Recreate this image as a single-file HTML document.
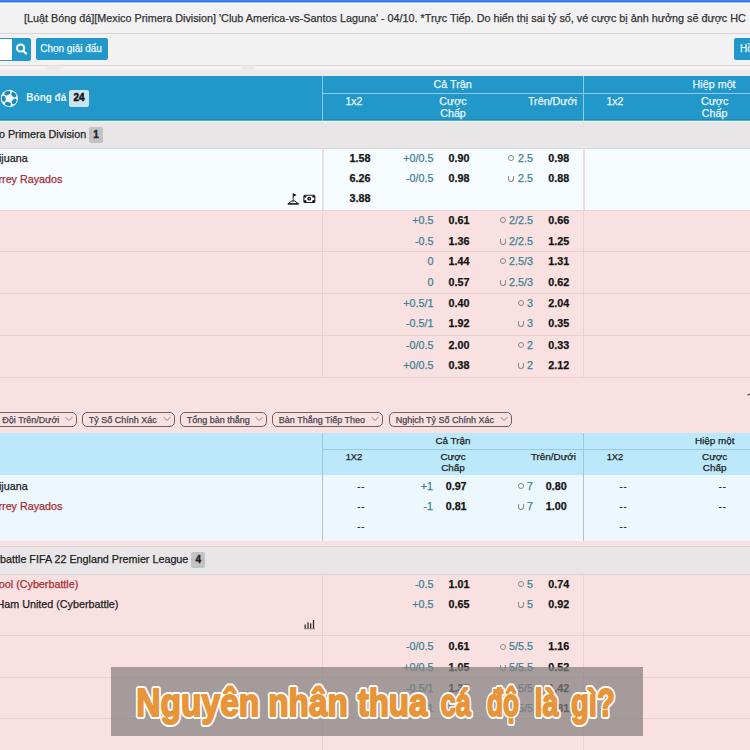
<!DOCTYPE html>
<html><head><meta charset="utf-8"><style>
html,body{margin:0;padding:0;}
body{width:750px;height:750px;overflow:hidden;position:relative;background:#f2f2f2;font-family:"Liberation Sans", sans-serif;}
</style></head><body>
<div style="position:absolute;left:0px;top:0px;width:750px;height:1px;background:#3a89f6"></div>
<div style="position:absolute;left:0px;top:1px;width:750px;height:1px;background:#2f72d9"></div>
<div style="position:absolute;left:0px;top:2px;width:750px;height:1px;background:#a3bdec"></div>
<div style="position:absolute;left:0px;top:3px;width:750px;height:1px;background:#f8fdff"></div>
<div style="position:absolute;left:0px;top:4px;width:750px;height:1px;background:#eff0f4"></div>
<div style="position:absolute;left:24px;top:18.06px;height:0;line-height:0;font-size:10.8px;font-weight:400;color:#333;-webkit-text-stroke:0.25px #333;white-space:nowrap;">[Luật Bóng đá][Mexico Primera Division] 'Club America-vs-Santos Laguna' - 04/10. *Trực Tiếp. Do hiển thị sai tỷ số, vé cược bị ảnh hưởng sẽ được HC</div>
<div style="position:absolute;left:0px;top:33px;width:750px;height:1px;background:#d6d6d6"></div>
<div style="position:absolute;left:0px;top:38px;width:12px;height:22.5px;background:#fff;border-top:1px solid #3d90b8;border-bottom:1px solid #3d90b8;box-sizing:border-box"></div>
<div style="position:absolute;left:12px;top:38px;width:19px;height:22.5px;background:#2297c9;border-radius:0 2px 2px 0"></div>
<svg style="position:absolute;left:14px;top:41px" width="15" height="16" viewBox="0 0 15 16"><circle cx="6.6" cy="7" r="3.6" fill="none" stroke="#fff" stroke-width="2"/><line x1="9.2" y1="9.7" x2="12" y2="12.6" stroke="#fff" stroke-width="2.2" stroke-linecap="round"/></svg>
<div style="position:absolute;left:36px;top:38.4px;width:72.2px;height:22.1px;background:#2297c9;border-radius:2px"></div>
<div style="position:absolute;left:40.2px;top:49.14px;height:0;line-height:0;font-size:10px;font-weight:400;color:#eafaff;-webkit-text-stroke:0.25px #eafaff;white-space:nowrap;">Chọn giải đấu</div>
<div style="position:absolute;left:734px;top:38.2px;width:26px;height:22.299999999999997px;background:#2297c9;border-radius:2px"></div>
<div style="position:absolute;left:740px;top:49.14px;height:0;line-height:0;font-size:10px;font-weight:400;color:#eafaff;-webkit-text-stroke:0.25px #eafaff;white-space:nowrap;">Hồ</div>
<div style="position:absolute;left:0px;top:65px;width:750px;height:1px;background:#d9d7d7"></div>
<div style="position:absolute;left:0px;top:66px;width:750px;height:4px;background:#f4f2f2"></div>
<div style="position:absolute;left:0px;top:70px;width:750px;height:6px;background:#ebe9e9"></div>
<svg style="position:absolute;left:46px;top:65px" width="16" height="6" viewBox="0 0 16 6"><polygon points="3,0.5 13,0.5 16,5 0,5" fill="#ebe9e9"/></svg>
<svg style="position:absolute;left:239.5px;top:65px" width="16" height="6" viewBox="0 0 16 6"><polygon points="3,0.5 13,0.5 16,5 0,5" fill="#ebe9e9"/></svg>
<div style="position:absolute;left:0px;top:76px;width:750px;height:43px;background:#2297c9"></div>
<div style="position:absolute;left:0px;top:119px;width:750px;height:1px;background:#2089b6"></div>
<div style="position:absolute;left:0px;top:120px;width:750px;height:1px;background:#5ea9c2"></div>
<div style="position:absolute;left:0px;top:121px;width:750px;height:1px;background:#e3fbff"></div>
<div style="position:absolute;left:322px;top:76px;width:1px;height:45px;background:#8fcbe6"></div>
<div style="position:absolute;left:583px;top:76px;width:1px;height:45px;background:#8fcbe6"></div>
<div style="position:absolute;left:323px;top:93px;width:427px;height:1px;background:#8fcbe6"></div>
<svg style="position:absolute;left:0px;top:89px" width="19" height="19" viewBox="0 0 19 19"><circle cx="9.4" cy="9.4" r="8.6" fill="#eefaff"/><ellipse cx="3.71" cy="9.80" rx="3.0" ry="2.0" transform="rotate(266 3.71 9.80)" fill="#1f88b9"/><ellipse cx="7.26" cy="4.12" rx="3.0" ry="2.0" transform="rotate(-22 7.26 4.12)" fill="#1f88b9"/><ellipse cx="13.77" cy="5.74" rx="3.0" ry="2.0" transform="rotate(50 13.77 5.74)" fill="#1f88b9"/><ellipse cx="14.23" cy="12.42" rx="3.0" ry="2.0" transform="rotate(122 14.23 12.42)" fill="#1f88b9"/><ellipse cx="8.02" cy="14.93" rx="3.0" ry="2.0" transform="rotate(194 8.02 14.93)" fill="#1f88b9"/></svg>
<div style="position:absolute;left:26.3px;top:97.53px;height:0;line-height:0;font-size:10px;font-weight:700;color:#e2f7ff;-webkit-text-stroke:0.25px #e2f7ff;white-space:nowrap;-webkit-text-stroke:0">Bóng đá</div>
<div style="position:absolute;left:69px;top:90px;width:20px;height:16.5px;background:#c9e4f2;border-radius:2px"></div>
<div style="position:absolute;left:-221px;width:600px;text-align:center;top:97.53px;height:0;line-height:0;font-size:10px;font-weight:700;color:#111;-webkit-text-stroke:0.25px #111;white-space:nowrap;-webkit-text-stroke:0.45px #111">24</div>
<div style="position:absolute;left:152.7px;width:600px;text-align:center;top:84.28px;height:0;line-height:0;font-size:10.75px;font-weight:400;color:#e9f8ff;-webkit-text-stroke:0.25px #e9f8ff;white-space:nowrap;">Cả Trận</div>
<div style="position:absolute;right:36px;top:84.28px;height:0;line-height:0;font-size:10.75px;font-weight:400;color:#e9f8ff;-webkit-text-stroke:0.25px #e9f8ff;white-space:nowrap;right:14.4px">Hiệp một</div>
<div style="position:absolute;left:54px;width:600px;text-align:center;top:101.26px;height:0;line-height:0;font-size:10.5px;font-weight:400;color:#e9f8ff;-webkit-text-stroke:0.25px #e9f8ff;white-space:nowrap;">1x2</div>
<div style="position:absolute;left:153px;width:600px;text-align:center;top:101.18px;height:0;line-height:0;font-size:10.75px;font-weight:400;color:#e9f8ff;-webkit-text-stroke:0.25px #e9f8ff;white-space:nowrap;">Cược</div>
<div style="position:absolute;left:153px;width:600px;text-align:center;top:112.78px;height:0;line-height:0;font-size:10.75px;font-weight:400;color:#e9f8ff;-webkit-text-stroke:0.25px #e9f8ff;white-space:nowrap;">Chấp</div>
<div style="position:absolute;right:173px;top:101.18px;height:0;line-height:0;font-size:10.75px;font-weight:400;color:#e9f8ff;-webkit-text-stroke:0.25px #e9f8ff;white-space:nowrap;">Trên/Dưới</div>
<div style="position:absolute;left:315px;width:600px;text-align:center;top:101.26px;height:0;line-height:0;font-size:10.5px;font-weight:400;color:#e9f8ff;-webkit-text-stroke:0.25px #e9f8ff;white-space:nowrap;">1x2</div>
<div style="position:absolute;left:414.6px;width:600px;text-align:center;top:101.18px;height:0;line-height:0;font-size:10.75px;font-weight:400;color:#e9f8ff;-webkit-text-stroke:0.25px #e9f8ff;white-space:nowrap;">Cược</div>
<div style="position:absolute;left:414.6px;width:600px;text-align:center;top:112.78px;height:0;line-height:0;font-size:10.75px;font-weight:400;color:#e9f8ff;-webkit-text-stroke:0.25px #e9f8ff;white-space:nowrap;">Chấp</div>
<div style="position:absolute;left:0px;top:122px;width:750px;height:26px;background:#e8e6e6"></div>
<div style="position:absolute;left:0px;top:148px;width:750px;height:1px;background:#d8d8d8"></div>
<div style="position:absolute;right:663.8px;top:134.28px;height:0;line-height:0;font-size:10.75px;font-weight:400;color:#222;-webkit-text-stroke:0.25px #222;white-space:nowrap;">Mexico Primera Division</div>
<div style="position:absolute;left:89.3px;top:126.8px;width:13.400000000000006px;height:16.000000000000014px;background:#c3c3c3;border-radius:2px"></div>
<div style="position:absolute;left:-204px;width:600px;text-align:center;top:134.73px;height:0;line-height:0;font-size:10px;font-weight:700;color:#222;-webkit-text-stroke:0.25px #222;white-space:nowrap;-webkit-text-stroke:0.4px #222">1</div>
<div style="position:absolute;left:0px;top:149px;width:750px;height:61px;background:#f6fcff"></div>
<div style="position:absolute;left:322px;top:149px;width:1.5px;height:61px;background:#e9e0e0"></div>
<div style="position:absolute;left:583px;top:149px;width:1.5px;height:61px;background:#e9e0e0"></div>
<div style="position:absolute;right:722.4px;top:158.28px;height:0;line-height:0;font-size:10.75px;font-weight:400;color:#1a1a1a;-webkit-text-stroke:0.25px #1a1a1a;white-space:nowrap;">Tijuana</div>
<div style="position:absolute;right:687.6px;top:179.18px;height:0;line-height:0;font-size:10.75px;font-weight:400;color:#a52d33;-webkit-text-stroke:0.25px #a52d33;white-space:nowrap;">Monterrey Rayados</div>
<div style="position:absolute;right:379.5px;top:157.58px;height:0;line-height:0;font-size:10.75px;font-weight:700;color:#141414;-webkit-text-stroke:0.25px #141414;white-space:nowrap;">1.58</div>
<div style="position:absolute;right:316.5px;top:157.58px;height:0;line-height:0;font-size:10.75px;font-weight:400;color:#3f8294;-webkit-text-stroke:0.25px #3f8294;white-space:nowrap;">+0/0.5</div>
<div style="position:absolute;right:280.5px;top:157.58px;height:0;line-height:0;font-size:10.75px;font-weight:700;color:#141414;-webkit-text-stroke:0.25px #141414;white-space:nowrap;">0.90</div>
<div style="position:absolute;right:217px;top:157.58px;height:0;line-height:0;font-size:10.75px;font-weight:400;color:#3f8294;-webkit-text-stroke:0.25px #3f8294;white-space:nowrap;">2.5</div>
<div style="position:absolute;right:180.79999999999995px;top:157.58px;height:0;line-height:0;font-size:10.75px;font-weight:700;color:#141414;-webkit-text-stroke:0.25px #141414;white-space:nowrap;">0.98</div>
<div style="position:absolute;left:508px;top:154.70000000000002px;width:6px;height:6.0px;border:1px solid #8a8a8a;border-radius:50%;box-sizing:border-box"></div>
<div style="position:absolute;right:379.5px;top:178.38px;height:0;line-height:0;font-size:10.75px;font-weight:700;color:#141414;-webkit-text-stroke:0.25px #141414;white-space:nowrap;">6.26</div>
<div style="position:absolute;right:316.5px;top:178.38px;height:0;line-height:0;font-size:10.75px;font-weight:400;color:#3f8294;-webkit-text-stroke:0.25px #3f8294;white-space:nowrap;">-0/0.5</div>
<div style="position:absolute;right:280.5px;top:178.38px;height:0;line-height:0;font-size:10.75px;font-weight:700;color:#141414;-webkit-text-stroke:0.25px #141414;white-space:nowrap;">0.98</div>
<div style="position:absolute;right:217px;top:178.38px;height:0;line-height:0;font-size:10.75px;font-weight:400;color:#3f8294;-webkit-text-stroke:0.25px #3f8294;white-space:nowrap;">2.5</div>
<div style="position:absolute;right:180.79999999999995px;top:178.38px;height:0;line-height:0;font-size:10.75px;font-weight:700;color:#141414;-webkit-text-stroke:0.25px #141414;white-space:nowrap;">0.88</div>
<div style="position:absolute;left:508px;top:176.1px;width:6px;height:6.199999999999989px;border:1.1px solid #8a8a8a;border-top:none;border-radius:0 0 3px 3px;box-sizing:border-box"></div>
<div style="position:absolute;right:379.5px;top:197.58px;height:0;line-height:0;font-size:10.75px;font-weight:700;color:#141414;-webkit-text-stroke:0.25px #141414;white-space:nowrap;">3.88</div>
<svg style="position:absolute;left:286px;top:192px" width="14" height="13" viewBox="0 0 14 13"><line x1="7.2" y1="1.4" x2="7.2" y2="9.2" stroke="#222" stroke-width="0.9"/><polygon points="7.2,1.2 10.6,3.1 7.2,5" fill="#111"/><path d="M1.8 11.9 L5.6 9 L8.8 9 L12.6 11.9 Z" fill="none" stroke="#111" stroke-width="1" stroke-linejoin="round"/><path d="M2.2 11.9 L12.2 11.9" stroke="#111" stroke-width="1.2"/></svg>
<svg style="position:absolute;left:303px;top:194px" width="13" height="10" viewBox="0 0 13 10"><rect x="0.9" y="1.3" width="10.9" height="7.2" rx="1" fill="#fff" stroke="#222" stroke-width="1.1"/><circle cx="2.2" cy="2.6" r="1.2" fill="#111"/><circle cx="10.5" cy="2.6" r="1.2" fill="#111"/><circle cx="2.2" cy="7.2" r="1.2" fill="#111"/><circle cx="10.5" cy="7.2" r="1.2" fill="#111"/><circle cx="6.2" cy="4.7" r="1.9" fill="#111"/><polygon points="5.5,4 7.4,4.4 6.2,5.6" fill="#ddd"/></svg>
<div style="position:absolute;left:0px;top:210px;width:750px;height:222.60000000000002px;background:#f9e1e1"></div>
<div style="position:absolute;left:0px;top:210px;width:750px;height:1px;background:#e9d5d7"></div>
<div style="position:absolute;left:0px;top:251px;width:750px;height:1px;background:#ead2d2"></div>
<div style="position:absolute;left:0px;top:293px;width:750px;height:1px;background:#ead2d2"></div>
<div style="position:absolute;left:0px;top:335px;width:750px;height:1px;background:#ead2d2"></div>
<div style="position:absolute;left:0px;top:376.5px;width:750px;height:1.0px;background:#ead2d2"></div>
<div style="position:absolute;left:322px;top:210px;width:1px;height:166.5px;background:#ead2d2"></div>
<div style="position:absolute;left:583px;top:210px;width:1px;height:166.5px;background:#ead2d2"></div>
<div style="position:absolute;right:316.5px;top:220.28px;height:0;line-height:0;font-size:10.75px;font-weight:400;color:#3f8294;-webkit-text-stroke:0.25px #3f8294;white-space:nowrap;">+0.5</div>
<div style="position:absolute;right:280.5px;top:220.28px;height:0;line-height:0;font-size:10.75px;font-weight:700;color:#141414;-webkit-text-stroke:0.25px #141414;white-space:nowrap;">0.61</div>
<div style="position:absolute;right:217px;top:220.28px;height:0;line-height:0;font-size:10.75px;font-weight:400;color:#3f8294;-webkit-text-stroke:0.25px #3f8294;white-space:nowrap;">2/2.5</div>
<div style="position:absolute;right:180.79999999999995px;top:220.28px;height:0;line-height:0;font-size:10.75px;font-weight:700;color:#141414;-webkit-text-stroke:0.25px #141414;white-space:nowrap;">0.66</div>
<div style="position:absolute;left:500.078125px;top:217.4px;width:6.0px;height:6.0px;border:1px solid #8a8a8a;border-radius:50%;box-sizing:border-box"></div>
<div style="position:absolute;right:316.5px;top:240.88px;height:0;line-height:0;font-size:10.75px;font-weight:400;color:#3f8294;-webkit-text-stroke:0.25px #3f8294;white-space:nowrap;">-0.5</div>
<div style="position:absolute;right:280.5px;top:240.88px;height:0;line-height:0;font-size:10.75px;font-weight:700;color:#141414;-webkit-text-stroke:0.25px #141414;white-space:nowrap;">1.36</div>
<div style="position:absolute;right:217px;top:240.88px;height:0;line-height:0;font-size:10.75px;font-weight:400;color:#3f8294;-webkit-text-stroke:0.25px #3f8294;white-space:nowrap;">2/2.5</div>
<div style="position:absolute;right:180.79999999999995px;top:240.88px;height:0;line-height:0;font-size:10.75px;font-weight:700;color:#141414;-webkit-text-stroke:0.25px #141414;white-space:nowrap;">1.25</div>
<div style="position:absolute;left:500.078125px;top:238.6px;width:6.0px;height:6.199999999999989px;border:1.1px solid #8a8a8a;border-top:none;border-radius:0 0 3px 3px;box-sizing:border-box"></div>
<div style="position:absolute;right:316.5px;top:261.28px;height:0;line-height:0;font-size:10.75px;font-weight:400;color:#3f8294;-webkit-text-stroke:0.25px #3f8294;white-space:nowrap;">0</div>
<div style="position:absolute;right:280.5px;top:261.28px;height:0;line-height:0;font-size:10.75px;font-weight:700;color:#141414;-webkit-text-stroke:0.25px #141414;white-space:nowrap;">1.44</div>
<div style="position:absolute;right:217px;top:261.28px;height:0;line-height:0;font-size:10.75px;font-weight:400;color:#3f8294;-webkit-text-stroke:0.25px #3f8294;white-space:nowrap;">2.5/3</div>
<div style="position:absolute;right:180.79999999999995px;top:261.28px;height:0;line-height:0;font-size:10.75px;font-weight:700;color:#141414;-webkit-text-stroke:0.25px #141414;white-space:nowrap;">1.31</div>
<div style="position:absolute;left:500.078125px;top:258.4px;width:6.0px;height:6.0px;border:1px solid #8a8a8a;border-radius:50%;box-sizing:border-box"></div>
<div style="position:absolute;right:316.5px;top:281.88px;height:0;line-height:0;font-size:10.75px;font-weight:400;color:#3f8294;-webkit-text-stroke:0.25px #3f8294;white-space:nowrap;">0</div>
<div style="position:absolute;right:280.5px;top:281.88px;height:0;line-height:0;font-size:10.75px;font-weight:700;color:#141414;-webkit-text-stroke:0.25px #141414;white-space:nowrap;">0.57</div>
<div style="position:absolute;right:217px;top:281.88px;height:0;line-height:0;font-size:10.75px;font-weight:400;color:#3f8294;-webkit-text-stroke:0.25px #3f8294;white-space:nowrap;">2.5/3</div>
<div style="position:absolute;right:180.79999999999995px;top:281.88px;height:0;line-height:0;font-size:10.75px;font-weight:700;color:#141414;-webkit-text-stroke:0.25px #141414;white-space:nowrap;">0.62</div>
<div style="position:absolute;left:500.078125px;top:279.6px;width:6.0px;height:6.199999999999989px;border:1.1px solid #8a8a8a;border-top:none;border-radius:0 0 3px 3px;box-sizing:border-box"></div>
<div style="position:absolute;right:316.5px;top:303.28px;height:0;line-height:0;font-size:10.75px;font-weight:400;color:#3f8294;-webkit-text-stroke:0.25px #3f8294;white-space:nowrap;">+0.5/1</div>
<div style="position:absolute;right:280.5px;top:303.28px;height:0;line-height:0;font-size:10.75px;font-weight:700;color:#141414;-webkit-text-stroke:0.25px #141414;white-space:nowrap;">0.40</div>
<div style="position:absolute;right:217px;top:303.28px;height:0;line-height:0;font-size:10.75px;font-weight:400;color:#3f8294;-webkit-text-stroke:0.25px #3f8294;white-space:nowrap;">3</div>
<div style="position:absolute;right:180.79999999999995px;top:303.28px;height:0;line-height:0;font-size:10.75px;font-weight:700;color:#141414;-webkit-text-stroke:0.25px #141414;white-space:nowrap;">2.04</div>
<div style="position:absolute;left:518.015625px;top:300.4px;width:6.0px;height:6.0px;border:1px solid #8a8a8a;border-radius:50%;box-sizing:border-box"></div>
<div style="position:absolute;right:316.5px;top:323.48px;height:0;line-height:0;font-size:10.75px;font-weight:400;color:#3f8294;-webkit-text-stroke:0.25px #3f8294;white-space:nowrap;">-0.5/1</div>
<div style="position:absolute;right:280.5px;top:323.48px;height:0;line-height:0;font-size:10.75px;font-weight:700;color:#141414;-webkit-text-stroke:0.25px #141414;white-space:nowrap;">1.92</div>
<div style="position:absolute;right:217px;top:323.48px;height:0;line-height:0;font-size:10.75px;font-weight:400;color:#3f8294;-webkit-text-stroke:0.25px #3f8294;white-space:nowrap;">3</div>
<div style="position:absolute;right:180.79999999999995px;top:323.48px;height:0;line-height:0;font-size:10.75px;font-weight:700;color:#141414;-webkit-text-stroke:0.25px #141414;white-space:nowrap;">0.35</div>
<div style="position:absolute;left:518.015625px;top:321.2px;width:6.0px;height:6.199999999999989px;border:1.1px solid #8a8a8a;border-top:none;border-radius:0 0 3px 3px;box-sizing:border-box"></div>
<div style="position:absolute;right:316.5px;top:344.88px;height:0;line-height:0;font-size:10.75px;font-weight:400;color:#3f8294;-webkit-text-stroke:0.25px #3f8294;white-space:nowrap;">-0/0.5</div>
<div style="position:absolute;right:280.5px;top:344.88px;height:0;line-height:0;font-size:10.75px;font-weight:700;color:#141414;-webkit-text-stroke:0.25px #141414;white-space:nowrap;">2.00</div>
<div style="position:absolute;right:217px;top:344.88px;height:0;line-height:0;font-size:10.75px;font-weight:400;color:#3f8294;-webkit-text-stroke:0.25px #3f8294;white-space:nowrap;">2</div>
<div style="position:absolute;right:180.79999999999995px;top:344.88px;height:0;line-height:0;font-size:10.75px;font-weight:700;color:#141414;-webkit-text-stroke:0.25px #141414;white-space:nowrap;">0.33</div>
<div style="position:absolute;left:518.015625px;top:342.0px;width:6.0px;height:6.0px;border:1px solid #8a8a8a;border-radius:50%;box-sizing:border-box"></div>
<div style="position:absolute;right:316.5px;top:365.28px;height:0;line-height:0;font-size:10.75px;font-weight:400;color:#3f8294;-webkit-text-stroke:0.25px #3f8294;white-space:nowrap;">+0/0.5</div>
<div style="position:absolute;right:280.5px;top:365.28px;height:0;line-height:0;font-size:10.75px;font-weight:700;color:#141414;-webkit-text-stroke:0.25px #141414;white-space:nowrap;">0.38</div>
<div style="position:absolute;right:217px;top:365.28px;height:0;line-height:0;font-size:10.75px;font-weight:400;color:#3f8294;-webkit-text-stroke:0.25px #3f8294;white-space:nowrap;">2</div>
<div style="position:absolute;right:180.79999999999995px;top:365.28px;height:0;line-height:0;font-size:10.75px;font-weight:700;color:#141414;-webkit-text-stroke:0.25px #141414;white-space:nowrap;">2.12</div>
<div style="position:absolute;left:518.015625px;top:363px;width:6.0px;height:6.199999999999989px;border:1.1px solid #8a8a8a;border-top:none;border-radius:0 0 3px 3px;box-sizing:border-box"></div>
<div style="position:absolute;left:-40px;top:412.3px;width:116.8px;height:15.199999999999989px;border:1.3px solid #6e6264;border-radius:5px;box-sizing:border-box"></div>
<div style="position:absolute;right:690.7px;top:419.88px;height:0;line-height:0;font-size:9px;font-weight:400;color:#474550;-webkit-text-stroke:0.25px #474550;white-space:nowrap;">Tổng Đội Trên/Dưới</div>
<svg style="position:absolute;left:64.8px;top:416px" width="8" height="6" viewBox="0 0 8 6"><polyline points="0.7,1.2 4,4.5 7.3,1.2" fill="none" stroke="#8a8486" stroke-width="1"/></svg>
<div style="position:absolute;left:82.1px;top:412.3px;width:92.6px;height:15.199999999999989px;border:1.3px solid #6e6264;border-radius:5px;box-sizing:border-box"></div>
<div style="position:absolute;left:88.8px;top:419.88px;height:0;line-height:0;font-size:9px;font-weight:400;color:#474550;-webkit-text-stroke:0.25px #474550;white-space:nowrap;">Tỷ Số Chính Xác</div>
<svg style="position:absolute;left:162.7px;top:416px" width="8" height="6" viewBox="0 0 8 6"><polyline points="0.7,1.2 4,4.5 7.3,1.2" fill="none" stroke="#8a8486" stroke-width="1"/></svg>
<div style="position:absolute;left:180px;top:412.3px;width:86.69999999999999px;height:15.199999999999989px;border:1.3px solid #6e6264;border-radius:5px;box-sizing:border-box"></div>
<div style="position:absolute;left:186.7px;top:419.88px;height:0;line-height:0;font-size:9px;font-weight:400;color:#474550;-webkit-text-stroke:0.25px #474550;white-space:nowrap;">Tổng bàn thắng</div>
<svg style="position:absolute;left:254.7px;top:416px" width="8" height="6" viewBox="0 0 8 6"><polyline points="0.7,1.2 4,4.5 7.3,1.2" fill="none" stroke="#8a8486" stroke-width="1"/></svg>
<div style="position:absolute;left:272.1px;top:412.3px;width:110.89999999999998px;height:15.199999999999989px;border:1.3px solid #6e6264;border-radius:5px;box-sizing:border-box"></div>
<div style="position:absolute;left:278.8px;top:419.88px;height:0;line-height:0;font-size:9px;font-weight:400;color:#474550;-webkit-text-stroke:0.25px #474550;white-space:nowrap;">Bàn Thắng Tiếp Theo</div>
<svg style="position:absolute;left:371px;top:416px" width="8" height="6" viewBox="0 0 8 6"><polyline points="0.7,1.2 4,4.5 7.3,1.2" fill="none" stroke="#8a8486" stroke-width="1"/></svg>
<div style="position:absolute;left:389px;top:412.3px;width:123px;height:15.199999999999989px;border:1.3px solid #6e6264;border-radius:5px;box-sizing:border-box"></div>
<div style="position:absolute;left:395.7px;top:419.88px;height:0;line-height:0;font-size:9px;font-weight:400;color:#474550;-webkit-text-stroke:0.25px #474550;white-space:nowrap;">Nghịch Tỷ Số Chính Xác</div>
<svg style="position:absolute;left:500px;top:416px" width="8" height="6" viewBox="0 0 8 6"><polyline points="0.7,1.2 4,4.5 7.3,1.2" fill="none" stroke="#8a8486" stroke-width="1"/></svg>
<svg style="position:absolute;left:744px;top:390px" width="6" height="8" viewBox="0 0 6 8"><line x1="3.5" y1="5.2" x2="7" y2="3.6" stroke="#444" stroke-width="1.1"/></svg>
<div style="position:absolute;left:0px;top:432.6px;width:750px;height:42.39999999999998px;background:#bce8fb"></div>
<div style="position:absolute;left:322px;top:432.6px;width:1px;height:42.39999999999998px;background:#98c9dc"></div>
<div style="position:absolute;left:583px;top:432.6px;width:1px;height:42.39999999999998px;background:#98c9dc"></div>
<div style="position:absolute;left:323px;top:449px;width:427px;height:1px;background:#98c9dc"></div>
<div style="position:absolute;left:153px;width:600px;text-align:center;top:440.57px;height:0;line-height:0;font-size:9.9px;font-weight:400;color:#222;-webkit-text-stroke:0.25px #222;white-space:nowrap;">Cả Trận</div>
<div style="position:absolute;right:15.5px;top:440.57px;height:0;line-height:0;font-size:9.9px;font-weight:400;color:#222;-webkit-text-stroke:0.25px #222;white-space:nowrap;">Hiệp một</div>
<div style="position:absolute;left:54px;width:600px;text-align:center;top:457.34px;height:0;line-height:0;font-size:9.4px;font-weight:400;color:#222;-webkit-text-stroke:0.25px #222;white-space:nowrap;">1X2</div>
<div style="position:absolute;left:153px;width:600px;text-align:center;top:457.17px;height:0;line-height:0;font-size:9.9px;font-weight:400;color:#222;-webkit-text-stroke:0.25px #222;white-space:nowrap;">Cược</div>
<div style="position:absolute;left:153px;width:600px;text-align:center;top:467.97px;height:0;line-height:0;font-size:9.9px;font-weight:400;color:#222;-webkit-text-stroke:0.25px #222;white-space:nowrap;">Chấp</div>
<div style="position:absolute;right:174px;top:457.17px;height:0;line-height:0;font-size:9.9px;font-weight:400;color:#222;-webkit-text-stroke:0.25px #222;white-space:nowrap;">Trên/Dưới</div>
<div style="position:absolute;left:315px;width:600px;text-align:center;top:457.34px;height:0;line-height:0;font-size:9.4px;font-weight:400;color:#222;-webkit-text-stroke:0.25px #222;white-space:nowrap;">1X2</div>
<div style="position:absolute;left:414.6px;width:600px;text-align:center;top:457.17px;height:0;line-height:0;font-size:9.9px;font-weight:400;color:#222;-webkit-text-stroke:0.25px #222;white-space:nowrap;">Cược</div>
<div style="position:absolute;left:414.6px;width:600px;text-align:center;top:467.97px;height:0;line-height:0;font-size:9.9px;font-weight:400;color:#222;-webkit-text-stroke:0.25px #222;white-space:nowrap;">Chấp</div>
<div style="position:absolute;left:0px;top:475px;width:750px;height:66px;background:#ecf8fd"></div>
<div style="position:absolute;left:322px;top:475px;width:1px;height:66px;background:#b9c3c6"></div>
<div style="position:absolute;left:583px;top:475px;width:1px;height:66px;background:#b9c3c6"></div>
<div style="position:absolute;right:722.4px;top:486.28px;height:0;line-height:0;font-size:10.75px;font-weight:400;color:#1a1a1a;-webkit-text-stroke:0.25px #1a1a1a;white-space:nowrap;">Tijuana</div>
<div style="position:absolute;right:687.6px;top:506.28px;height:0;line-height:0;font-size:10.75px;font-weight:400;color:#a52d33;-webkit-text-stroke:0.25px #a52d33;white-space:nowrap;">Monterrey Rayados</div>
<div style="position:absolute;right:384.7px;top:485.58px;height:0;line-height:0;font-size:10.75px;font-weight:400;color:#222;-webkit-text-stroke:0.25px #222;white-space:nowrap;letter-spacing:0.6px;-webkit-text-stroke:0">--</div>
<div style="position:absolute;right:384.7px;top:506.28px;height:0;line-height:0;font-size:10.75px;font-weight:400;color:#222;-webkit-text-stroke:0.25px #222;white-space:nowrap;letter-spacing:0.6px;-webkit-text-stroke:0">--</div>
<div style="position:absolute;right:384.7px;top:526.28px;height:0;line-height:0;font-size:10.75px;font-weight:400;color:#222;-webkit-text-stroke:0.25px #222;white-space:nowrap;letter-spacing:0.6px;-webkit-text-stroke:0">--</div>
<div style="position:absolute;right:122.5px;top:485.58px;height:0;line-height:0;font-size:10.75px;font-weight:400;color:#222;-webkit-text-stroke:0.25px #222;white-space:nowrap;letter-spacing:0.6px;-webkit-text-stroke:0">--</div>
<div style="position:absolute;right:122.5px;top:506.28px;height:0;line-height:0;font-size:10.75px;font-weight:400;color:#222;-webkit-text-stroke:0.25px #222;white-space:nowrap;letter-spacing:0.6px;-webkit-text-stroke:0">--</div>
<div style="position:absolute;right:122.5px;top:526.28px;height:0;line-height:0;font-size:10.75px;font-weight:400;color:#222;-webkit-text-stroke:0.25px #222;white-space:nowrap;letter-spacing:0.6px;-webkit-text-stroke:0">--</div>
<div style="position:absolute;right:23.200000000000045px;top:485.58px;height:0;line-height:0;font-size:10.75px;font-weight:400;color:#222;-webkit-text-stroke:0.25px #222;white-space:nowrap;letter-spacing:0.6px;-webkit-text-stroke:0">--</div>
<div style="position:absolute;right:23.200000000000045px;top:506.28px;height:0;line-height:0;font-size:10.75px;font-weight:400;color:#222;-webkit-text-stroke:0.25px #222;white-space:nowrap;letter-spacing:0.6px;-webkit-text-stroke:0">--</div>
<div style="position:absolute;right:317px;top:485.58px;height:0;line-height:0;font-size:10.75px;font-weight:400;color:#3f8294;-webkit-text-stroke:0.25px #3f8294;white-space:nowrap;">+1</div>
<div style="position:absolute;right:283.4px;top:485.58px;height:0;line-height:0;font-size:10.75px;font-weight:700;color:#141414;-webkit-text-stroke:0.25px #141414;white-space:nowrap;">0.97</div>
<div style="position:absolute;right:217px;top:485.58px;height:0;line-height:0;font-size:10.75px;font-weight:400;color:#3f8294;-webkit-text-stroke:0.25px #3f8294;white-space:nowrap;">7</div>
<div style="position:absolute;right:183.29999999999995px;top:485.58px;height:0;line-height:0;font-size:10.75px;font-weight:700;color:#141414;-webkit-text-stroke:0.25px #141414;white-space:nowrap;">0.80</div>
<div style="position:absolute;left:517.6px;top:482.7px;width:6.0px;height:6.0px;border:1px solid #8a8a8a;border-radius:50%;box-sizing:border-box"></div>
<div style="position:absolute;right:317px;top:506.28px;height:0;line-height:0;font-size:10.75px;font-weight:400;color:#3f8294;-webkit-text-stroke:0.25px #3f8294;white-space:nowrap;">-1</div>
<div style="position:absolute;right:283.4px;top:506.28px;height:0;line-height:0;font-size:10.75px;font-weight:700;color:#141414;-webkit-text-stroke:0.25px #141414;white-space:nowrap;">0.81</div>
<div style="position:absolute;right:217px;top:506.28px;height:0;line-height:0;font-size:10.75px;font-weight:400;color:#3f8294;-webkit-text-stroke:0.25px #3f8294;white-space:nowrap;">7</div>
<div style="position:absolute;right:183.29999999999995px;top:506.28px;height:0;line-height:0;font-size:10.75px;font-weight:700;color:#141414;-webkit-text-stroke:0.25px #141414;white-space:nowrap;">1.00</div>
<div style="position:absolute;left:517.6px;top:504px;width:6.0px;height:6.199999999999989px;border:1.1px solid #8a8a8a;border-top:none;border-radius:0 0 3px 3px;box-sizing:border-box"></div>
<div style="position:absolute;left:0px;top:541px;width:750px;height:5px;background:#f9e1e1"></div>
<div style="position:absolute;left:0px;top:546px;width:750px;height:1px;background:#d9d1d1"></div>
<div style="position:absolute;left:0px;top:547px;width:750px;height:26.5px;background:#e8e6e6"></div>
<div style="position:absolute;left:0px;top:573.5px;width:750px;height:1.0px;background:#d9d1d1"></div>
<div style="position:absolute;right:561.7px;top:559.08px;height:0;line-height:0;font-size:10.75px;font-weight:400;color:#222;-webkit-text-stroke:0.25px #222;white-space:nowrap;">Cyberbattle FIFA 22 England Premier League</div>
<div style="position:absolute;left:191.2px;top:552px;width:14.100000000000023px;height:16.100000000000023px;background:#c3c3c3;border-radius:2px"></div>
<div style="position:absolute;left:-101.80000000000001px;width:600px;text-align:center;top:559.53px;height:0;line-height:0;font-size:10px;font-weight:700;color:#222;-webkit-text-stroke:0.25px #222;white-space:nowrap;-webkit-text-stroke:0.4px #222">4</div>
<div style="position:absolute;left:0px;top:574.5px;width:750px;height:175.5px;background:#f9e1e1"></div>
<div style="position:absolute;left:322px;top:574.5px;width:1px;height:175.5px;background:#ead2d2"></div>
<div style="position:absolute;left:583px;top:574.5px;width:1px;height:175.5px;background:#ead2d2"></div>
<div style="position:absolute;left:0px;top:635.3px;width:750px;height:1.0px;background:#ead2d2"></div>
<div style="position:absolute;left:0px;top:677px;width:750px;height:1px;background:#ead2d2"></div>
<div style="position:absolute;left:0px;top:718.3px;width:750px;height:1.0px;background:#ead2d2"></div>
<div style="position:absolute;right:671.7px;top:584.08px;height:0;line-height:0;font-size:10.75px;font-weight:400;color:#a52d33;-webkit-text-stroke:0.25px #a52d33;white-space:nowrap;">Liverpool (Cyberbattle)</div>
<div style="position:absolute;right:631.6px;top:604.08px;height:0;line-height:0;font-size:10.75px;font-weight:400;color:#1a1a1a;-webkit-text-stroke:0.25px #1a1a1a;white-space:nowrap;">West Ham United (Cyberbattle)</div>
<svg style="position:absolute;left:304px;top:619px" width="11" height="11" viewBox="0 0 11 11"><rect x="0.6" y="5.5" width="1.2" height="4" fill="#222"/><rect x="3.4" y="3.4" width="1.2" height="6.1" fill="#222"/><rect x="6.1" y="4.3" width="1.2" height="5.2" fill="#222"/><rect x="8.9" y="1" width="1.2" height="8.5" fill="#222"/><rect x="0" y="9.3" width="11" height="0.9" fill="#777"/></svg>
<div style="position:absolute;right:316.5px;top:584.28px;height:0;line-height:0;font-size:10.75px;font-weight:400;color:#3f8294;-webkit-text-stroke:0.25px #3f8294;white-space:nowrap;">-0.5</div>
<div style="position:absolute;right:280.5px;top:584.28px;height:0;line-height:0;font-size:10.75px;font-weight:700;color:#141414;-webkit-text-stroke:0.25px #141414;white-space:nowrap;">1.01</div>
<div style="position:absolute;right:217px;top:584.28px;height:0;line-height:0;font-size:10.75px;font-weight:400;color:#3f8294;-webkit-text-stroke:0.25px #3f8294;white-space:nowrap;">5</div>
<div style="position:absolute;right:180.79999999999995px;top:584.28px;height:0;line-height:0;font-size:10.75px;font-weight:700;color:#141414;-webkit-text-stroke:0.25px #141414;white-space:nowrap;">0.74</div>
<div style="position:absolute;left:518.015625px;top:581.4px;width:6.0px;height:6.0px;border:1px solid #8a8a8a;border-radius:50%;box-sizing:border-box"></div>
<div style="position:absolute;right:316.5px;top:603.78px;height:0;line-height:0;font-size:10.75px;font-weight:400;color:#3f8294;-webkit-text-stroke:0.25px #3f8294;white-space:nowrap;">+0.5</div>
<div style="position:absolute;right:280.5px;top:603.78px;height:0;line-height:0;font-size:10.75px;font-weight:700;color:#141414;-webkit-text-stroke:0.25px #141414;white-space:nowrap;">0.65</div>
<div style="position:absolute;right:217px;top:603.78px;height:0;line-height:0;font-size:10.75px;font-weight:400;color:#3f8294;-webkit-text-stroke:0.25px #3f8294;white-space:nowrap;">5</div>
<div style="position:absolute;right:180.79999999999995px;top:603.78px;height:0;line-height:0;font-size:10.75px;font-weight:700;color:#141414;-webkit-text-stroke:0.25px #141414;white-space:nowrap;">0.92</div>
<div style="position:absolute;left:518.015625px;top:601.5px;width:6.0px;height:6.2000000000000455px;border:1.1px solid #8a8a8a;border-top:none;border-radius:0 0 3px 3px;box-sizing:border-box"></div>
<div style="position:absolute;right:316.5px;top:646.48px;height:0;line-height:0;font-size:10.75px;font-weight:400;color:#3f8294;-webkit-text-stroke:0.25px #3f8294;white-space:nowrap;">-0/0.5</div>
<div style="position:absolute;right:280.5px;top:646.48px;height:0;line-height:0;font-size:10.75px;font-weight:700;color:#141414;-webkit-text-stroke:0.25px #141414;white-space:nowrap;">0.61</div>
<div style="position:absolute;right:217px;top:646.48px;height:0;line-height:0;font-size:10.75px;font-weight:400;color:#3f8294;-webkit-text-stroke:0.25px #3f8294;white-space:nowrap;">5/5.5</div>
<div style="position:absolute;right:180.79999999999995px;top:646.48px;height:0;line-height:0;font-size:10.75px;font-weight:700;color:#141414;-webkit-text-stroke:0.25px #141414;white-space:nowrap;">1.16</div>
<div style="position:absolute;left:500.078125px;top:643.6px;width:6.0px;height:6.0px;border:1px solid #8a8a8a;border-radius:50%;box-sizing:border-box"></div>
<div style="position:absolute;right:316.5px;top:667.28px;height:0;line-height:0;font-size:10.75px;font-weight:400;color:#3f8294;-webkit-text-stroke:0.25px #3f8294;white-space:nowrap;">+0/0.5</div>
<div style="position:absolute;right:280.5px;top:667.28px;height:0;line-height:0;font-size:10.75px;font-weight:700;color:#141414;-webkit-text-stroke:0.25px #141414;white-space:nowrap;">1.05</div>
<div style="position:absolute;right:217px;top:667.28px;height:0;line-height:0;font-size:10.75px;font-weight:400;color:#3f8294;-webkit-text-stroke:0.25px #3f8294;white-space:nowrap;">5/5.5</div>
<div style="position:absolute;right:180.79999999999995px;top:667.28px;height:0;line-height:0;font-size:10.75px;font-weight:700;color:#141414;-webkit-text-stroke:0.25px #141414;white-space:nowrap;">0.52</div>
<div style="position:absolute;left:500.078125px;top:665px;width:6.0px;height:6.2000000000000455px;border:1.1px solid #8a8a8a;border-top:none;border-radius:0 0 3px 3px;box-sizing:border-box"></div>
<div style="position:absolute;right:316.5px;top:687.78px;height:0;line-height:0;font-size:10.75px;font-weight:400;color:#3f8294;-webkit-text-stroke:0.25px #3f8294;white-space:nowrap;">-0.5/1</div>
<div style="position:absolute;right:280.5px;top:687.78px;height:0;line-height:0;font-size:10.75px;font-weight:700;color:#141414;-webkit-text-stroke:0.25px #141414;white-space:nowrap;">1.32</div>
<div style="position:absolute;right:217px;top:687.78px;height:0;line-height:0;font-size:10.75px;font-weight:400;color:#3f8294;-webkit-text-stroke:0.25px #3f8294;white-space:nowrap;">5/5</div>
<div style="position:absolute;right:180.79999999999995px;top:687.78px;height:0;line-height:0;font-size:10.75px;font-weight:700;color:#141414;-webkit-text-stroke:0.25px #141414;white-space:nowrap;">1.42</div>
<div style="position:absolute;left:509.046875px;top:684.9px;width:6.0px;height:6.0px;border:1px solid #8a8a8a;border-radius:50%;box-sizing:border-box"></div>
<div style="position:absolute;right:316.5px;top:708.28px;height:0;line-height:0;font-size:10.75px;font-weight:400;color:#3f8294;-webkit-text-stroke:0.25px #3f8294;white-space:nowrap;">+0.5/1</div>
<div style="position:absolute;right:280.5px;top:708.28px;height:0;line-height:0;font-size:10.75px;font-weight:700;color:#141414;-webkit-text-stroke:0.25px #141414;white-space:nowrap;">0.61</div>
<div style="position:absolute;right:217px;top:708.28px;height:0;line-height:0;font-size:10.75px;font-weight:400;color:#3f8294;-webkit-text-stroke:0.25px #3f8294;white-space:nowrap;">5/5</div>
<div style="position:absolute;right:180.79999999999995px;top:708.28px;height:0;line-height:0;font-size:10.75px;font-weight:700;color:#141414;-webkit-text-stroke:0.25px #141414;white-space:nowrap;">0.81</div>
<div style="position:absolute;left:509.046875px;top:706px;width:6.0px;height:6.2000000000000455px;border:1.1px solid #8a8a8a;border-top:none;border-radius:0 0 3px 3px;box-sizing:border-box"></div>
<div style="position:absolute;left:111px;top:667px;width:532px;height:69px;background:rgba(132,127,128,0.72)"></div>
<svg style="position:absolute;left:0;top:0" width="750" height="750" viewBox="0 0 750 750"><g font-family="Liberation Sans" font-weight="700" font-size="39.5" stroke-linejoin="round"><g fill="#fff" stroke="#fff" stroke-width="6.0"><text x="136.34" y="715.5" textLength="122.96" lengthAdjust="spacingAndGlyphs">Nguyên</text><text x="268.26" y="715.5" textLength="79.48" lengthAdjust="spacingAndGlyphs">nhân</text><text x="357.66" y="715.5" textLength="69.68" lengthAdjust="spacingAndGlyphs">thua</text><text x="440.54" y="715.5" textLength="30.32" lengthAdjust="spacingAndGlyphs">cá</text><text x="487.0" y="715.5" textLength="32.14" lengthAdjust="spacingAndGlyphs">độ</text><text x="534.4" y="715.5" textLength="24.0" lengthAdjust="spacingAndGlyphs">là</text><text x="571.0" y="715.5" textLength="43.74" lengthAdjust="spacingAndGlyphs">gì?</text></g><g fill="#e8953a" stroke="#e8953a" stroke-width="2.0"><text x="136.34" y="715.5" textLength="122.96" lengthAdjust="spacingAndGlyphs">Nguyên</text><text x="268.26" y="715.5" textLength="79.48" lengthAdjust="spacingAndGlyphs">nhân</text><text x="357.66" y="715.5" textLength="69.68" lengthAdjust="spacingAndGlyphs">thua</text><text x="440.54" y="715.5" textLength="30.32" lengthAdjust="spacingAndGlyphs">cá</text><text x="487.0" y="715.5" textLength="32.14" lengthAdjust="spacingAndGlyphs">độ</text><text x="534.4" y="715.5" textLength="24.0" lengthAdjust="spacingAndGlyphs">là</text><text x="571.0" y="715.5" textLength="43.74" lengthAdjust="spacingAndGlyphs">gì?</text></g></g></svg>
</body></html>
